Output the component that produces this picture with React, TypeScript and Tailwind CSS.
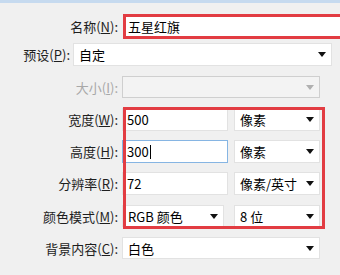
import { ReactNode } from "react";

function Arrow({ disabled }: { disabled?: boolean }) {
  return (
    <svg width="8" height="5" viewBox="0 0 8 5" className="shrink-0">
      <path d="M0 0 L8 0 L4 5 Z" fill={disabled ? "#b0b0b0" : "#111"} />
    </svg>
  );
}

function Label({ text, k, rest, w, disabled }: { text: string; k: string; rest?: string; w: string; disabled?: boolean }) {
  return (
    <div className={`${w} shrink-0 text-right ${disabled ? "text-[#a8a8a8]" : "text-[#1e1e1e]"}`}>
      {text}(<u>{k}</u>){rest ?? ":"}
    </div>
  );
}

function Select({ value, w, disabled }: { value: string; w: string; disabled?: boolean }) {
  return (
    <div
      className={`${w} h-full flex items-center justify-between pl-[5px] pr-[5px] ${
        disabled ? "bg-[#f3f3f3] border border-[#cfcfcf]" : "bg-white border border-[#e2e2e2]"
      }`}
    >
      <span>{value}</span>
      <Arrow disabled={disabled} />
    </div>
  );
}

function Input({ value, focused, children }: { value: string; focused?: boolean; children?: ReactNode }) {
  return (
    <div
      className={`w-[106px] h-full flex items-center pl-[4px] bg-white border ${
        focused ? "border-[#86b5e3]" : "border-[#e2e2e2]"
      }`}
    >
      {value}
      {children}
    </div>
  );
}

export default function App() {
  return (
    <div
      className="w-[340px] h-[275px] bg-[#f0f0f0] relative overflow-hidden text-[13px] leading-none"
      style={{ fontFamily: '"Noto Sans CJK SC", "Noto Sans", sans-serif' }}
    >
      <div className="h-[3px] bg-[#c6daef]" />

      {/* 名称 */}
      <div className="flex items-center mt-[11px] h-[25px]">
        <Label text="名称" k="N" w="w-[123px] pr-[5px]" />
        <div className="flex-1 h-full -mr-[10px] border-[3px] border-[#e23c42] bg-white flex items-center pl-[2px]">
          五星红旗
        </div>
      </div>

      {/* 预设 */}
      <div className="flex items-center mt-[4px] h-[23px]">
        <Label text="预设" k="P" w="w-[73px] pr-[3px]" />
        <Select value="自定" w="w-[259px]" />
      </div>

      {/* 大小 */}
      <div className="flex items-center mt-[10px] h-[22px]">
        <Label text="大小" k="I" w="w-[122px] pr-[4px]" disabled />
        <Select value="" w="w-[198px]" disabled />
      </div>

      <div className="relative">
        <div className="flex items-center mt-[10px] h-[23px]">
          <Label text="宽度" k="W" w="w-[122px] pr-[4px]" />
          <Input value="500" />
          <div className="w-[6px]" />
          <Select value="像素" w="w-[86px]" />
        </div>

        <div className="flex items-center mt-[9px] h-[23px]">
          <Label text="高度" k="H" w="w-[122px] pr-[4px]" />
          <Input value="300" focused>
            <span className="inline-block w-px h-[14px] bg-black ml-px" />
          </Input>
          <div className="w-[6px]" />
          <Select value="像素" w="w-[86px]" />
        </div>

        <div className="flex items-center mt-[9px] h-[23px]">
          <Label text="分辨率" k="R" w="w-[122px] pr-[4px]" />
          <Input value="72" />
          <div className="w-[6px]" />
          <Select value="像素/英寸" w="w-[86px]" />
        </div>

        <div className="flex items-center mt-[10px] h-[22px]">
          <Label text="颜色模式" k="M" w="w-[122px] pr-[4px]" />
          <Select value="RGB 颜色" w="w-[102px]" />
          <div className="w-[10px]" />
          <Select value="8 位" w="w-[86px]" />
        </div>

        {/* annotation box */}
        <div className="absolute left-[123px] top-[-1px] w-[202px] h-[122px] border-[3px] border-[#e23c42] pointer-events-none" />
      </div>

      {/* 背景内容 */}
      <div className="flex items-center mt-[10px] h-[22px]">
        <Label text="背景内容" k="C" w="w-[122px] pr-[4px]" />
        <Select value="白色" w="w-[198px]" />
      </div>
    </div>
  );
}
